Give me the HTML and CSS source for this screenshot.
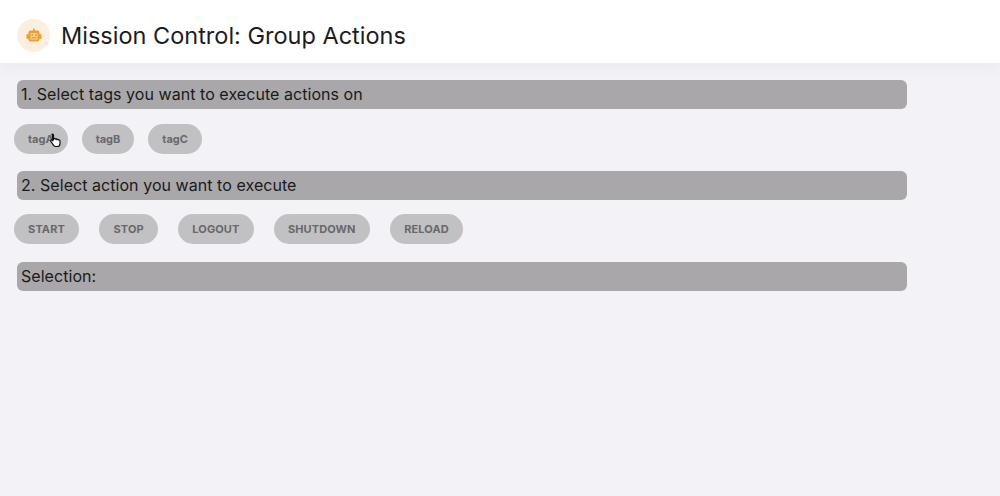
FILE: index.html
```html
<!DOCTYPE html>
<html lang="en">
<head>
  <meta charset="UTF-8">
  <meta name="viewport" content="width=device-width, initial-scale=1.0">
  <title>Mission Control: Group Actions</title>
  <link rel="stylesheet" href="styles.css">
</head>
<body>
  <header class="topbar">
    <div class="logo">
      <svg width="16" height="16" viewBox="0 0 16 16">
        <rect x="7.200" y="0.500" width="1.600" height="3" fill="#ef9f2e"/>
        <rect x="0.500" y="6" width="2.500" height="5" rx="1" fill="#ef9f2e"/>
        <rect x="13" y="6" width="2.500" height="5" rx="1" fill="#ef9f2e"/>
        <rect x="2.500" y="2.500" width="11" height="11" rx="2" fill="#ef9f2e"/>
        <rect x="4.500" y="5" width="7" height="6.500" fill="#f9d29c"/>
        <rect x="5.500" y="6.300" width="1.500" height="1.500" fill="#d98a20"/>
        <rect x="9" y="6.300" width="1.500" height="1.500" fill="#d98a20"/>
        <rect x="5.500" y="9.300" width="5" height="1" fill="#d98a20"/>
      </svg>
    </div>
    <h1>Mission Control: Group Actions</h1>
  </header>

  <main class="content">
    <h2 class="step">1. Select tags you want to execute actions on</h2>
    <div class="chips chips-tags">
      <button class="chip">tagA
        <svg class="cursor" width="12" height="15" viewBox="0 0 12 15">
          <path d="M2.500 1c.6 0 1 .5 1 1.100v4.400l.6-.9c.6-.3 1.200-.1 1.400.5.500-.4 1.200-.2 1.400.4.600-.4 1.300-.1 1.500.5.700-.3 1.600.2 1.600 1v2.400c0 1.800-1.200 3.100-3 3.100H5.800c-1 0-1.700-.4-2.200-1.100L1 8.700c-.4-.6-.3-1.200.2-1.600.4-.3 1-.2 1.300.2V2.100C1.500 1.500 1.900 1 2.500 1z" fill="#fff" stroke="#111" stroke-width="1.200"/>
        </svg>
      </button>
      <button class="chip">tagB</button>
      <button class="chip">tagC</button>
    </div>

    <h2 class="step">2. Select action you want to execute</h2>
    <div class="chips chips-actions">
      <button class="chip">START</button>
      <button class="chip">STOP</button>
      <button class="chip">LOGOUT</button>
      <button class="chip">SHUTDOWN</button>
      <button class="chip">RELOAD</button>
    </div>

    <h2 class="step">Selection:</h2>
  </main>
</body>
</html>
```

FILE: styles.css
```css
* {
  box-sizing: border-box;
  margin: 0;
  padding: 0;
  font-family: 'Inter', sans-serif;
}

body {
  background-color: #f3f2f7;
  height: 496px;
  overflow: hidden;
}

.topbar {
  display: flex;
  align-items: center;
  gap: 11px;
  height: 63px;
  padding: 8px 0 0 17px;
  background-color: #fff;
  box-shadow: 0 2px 16px rgba(60, 60, 80, 0.06);
}

.logo {
  display: flex;
  align-items: center;
  justify-content: center;
  width: 33px;
  height: 33px;
  border-radius: 50%;
  background-color: #fbefe0;
}

.topbar h1 {
  font-size: 23.5px;
  font-weight: 400;
  color: #1c1c20;
}

.content {
  padding: 17px 0 0 14px;
}

.step {
  width: 890px;
  height: 29px;
  margin-left: 3px;
  padding-left: 4px;
  border-radius: 6px;
  background-color: #a9a7aa;
  color: #1a1a1a;
  font-size: 16px;
  font-weight: 400;
  letter-spacing: 0.05px;
  line-height: 28px;
}

.chips {
  display: flex;
  margin: 14.5px 0 17.4px;
}

.chips-tags {
  gap: 14px;
}

.chips-tags .chip {
  padding: 0 14px;
  letter-spacing: 0;
}

.chips-actions {
  gap: 20.4px;
}

.chip {
  position: relative;
  height: 30px;
  padding: 0 14.1px;
  border: none;
  border-radius: 15px;
  background-color: #c1c0c2;
  color: #69686c;
  font-size: 11px;
  font-weight: 700;
  letter-spacing: 0.1px;
}

.cursor {
  position: absolute;
  left: 36px;
  top: 9px;
}
```
